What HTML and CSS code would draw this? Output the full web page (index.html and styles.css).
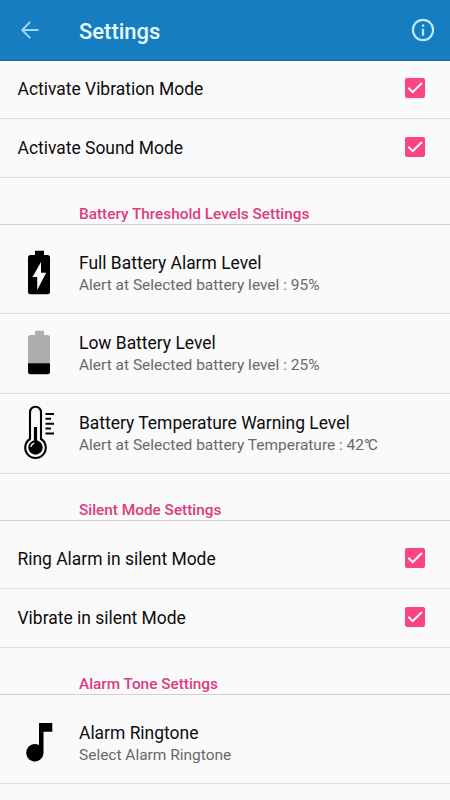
FILE: index.html
```html
<!DOCTYPE html>
<html lang="en">
<head>
<meta charset="utf-8">
<title>Settings</title>
<link rel="stylesheet" href="styles.css">
</head>
<body>
<svg class="defs" aria-hidden="true">
  <symbol id="check" viewBox="0 0 20 20">
    <rect width="20" height="20" rx="2" fill="#fc4482"/>
    <path d="M3.3 9.8 L7.7 14.2 L16.9 5" fill="none" stroke="#fff" stroke-width="2"/>
  </symbol>
</svg>
<header class="bar">
  <svg class="back" viewBox="0 0 18 18"><path d="M17.5 9H1.6M9.2 .9L1.2 9L9.2 17.1" fill="none" stroke="#9bd7fb" stroke-width="2"/></svg>
  <h1 class="bar-title">Settings</h1>
  <svg class="info" viewBox="0 0 24 24"><circle cx="12" cy="12" r="10.1" fill="none" stroke="#bdeaff" stroke-width="2.1"/><path d="M12 6.6v2.2M12 10.8v7" stroke="#bdeaff" stroke-width="2.3"/></svg>
</header>
<main>
  <div class="row top"><span class="title">Activate Vibration Mode</span><svg class="check"><use href="#check"/></svg></div>
  <div class="row taller"><span class="title">Activate Sound Mode</span><svg class="check"><use href="#check"/></svg></div>

  <h2 class="category">Battery Threshold Levels Settings</h2>
  <div class="row detail first">
    <svg class="icon" viewBox="0 0 40 60"><path d="M17 7.700h9v4.300h3.500q2.500 0 2.500 2.500v34.200q0 2.500-2.500 2.500h-17q-2.500 0-2.500-2.500v-34.200q0-2.500 2.500-2.500h4.500z"/><path d="M23 19v10.700h5.200L19.200 47V34H14.500z" fill="#fafafa"/></svg>
    <div class="text"><div class="title">Full Battery Alarm Level</div><div class="summary">Alert at Selected battery level : 95%</div></div>
  </div>
  <div class="row detail">
    <svg class="icon" viewBox="0 0 40 60"><path d="M17 7.700h9v4.300h3.500q2.500 0 2.500 2.500v26h-22v-26q0-2.500 2.500-2.500h4.500z" fill="#adadad"/><path d="M10 40.300h22v8.400q0 2.500-2.500 2.500h-17q-2.500 0-2.500-2.500z"/></svg>
    <div class="text"><div class="title">Low Battery Level</div><div class="summary">Alert at Selected battery level : 25%</div></div>
  </div>
  <div class="row detail">
    <svg class="icon" viewBox="0 0 40 60"><path d="M12 36V9.200a5.500 5.500 0 0 1 11 0V36a10.300 10.300 0 1 1-11 0z" fill="#fafafa" stroke="#000" stroke-width="2.100"/><circle cx="17.500" cy="44.500" r="7.200"/><path d="M17.500 24v18" stroke="#000" stroke-width="3.200"/><path d="M12.900 44a5 5 0 0 1 3.400-3.900" fill="none" stroke="#fafafa" stroke-width="1.200"/><path d="M27.500 11h8.500M27.500 15.800h5.500M27.500 20.700h8.500M27.500 25.500h5.500M27.500 30.500h8.500" stroke="#000" stroke-width="1.900"/></svg>
    <div class="text"><div class="title">Battery Temperature Warning Level</div><div class="summary">Alert at Selected battery Temperature : 42<span class="unit">°C</span></div></div>
  </div>

  <h2 class="category">Silent Mode Settings</h2>
  <div class="row first"><span class="title">Ring Alarm in silent Mode</span><svg class="check"><use href="#check"/></svg></div>
  <div class="row taller"><span class="title">Vibrate in silent Mode</span><svg class="check"><use href="#check"/></svg></div>

  <h2 class="category">Alarm Tone Settings</h2>
  <div class="row detail first">
    <svg class="icon" viewBox="0 0 40 60"><path d="M21 10h13.300v8.700h-8.800V40.300a8.700 8.700 0 1 1-4.500-8.200z"/></svg>
    <div class="text"><div class="title">Alarm Ringtone</div><div class="summary">Select Alarm Ringtone</div></div>
  </div>
</main>
</body>
</html>
```

FILE: styles.css
```css
* { box-sizing: border-box; }
body {
  margin: 0;
  height: 800px;
  overflow: hidden;
  background: #fafafa;
  color: #0c0c0c;
  font-family: Roboto, "Liberation Sans", sans-serif;
}
svg { display: block; flex: none; }
.defs { width: 0; height: 0; position: absolute; }
.bar {
  display: flex;
  align-items: center;
  height: 61px;
  padding: 0 15px 0 21px;
  background: #177dc1;
  border-bottom: 1px solid #126ba5;
}
.back { width: 18px; height: 18px; }
.bar-title {
  flex: 1;
  margin: 3px 0 0 40px;
  color: #e6f8ff;
  font-size: 22px;
  font-weight: 500;
  line-height: 26px;
}
.info { width: 24px; height: 24px; }
.row {
  display: flex;
  align-items: center;
  height: 58px;
  padding: 0 25px 0 17.5px;
  border-bottom: 1px solid #dcdcdc;
}
.row.top { padding-bottom: 2px; }
.row.taller { height: 59px; }
.row .title { flex: 1; }
.title { font-size: 17.45px; line-height: 24px; white-space: nowrap; }
.check { width: 20px; height: 20px; margin-top: -2px; }
.category {
  height: 47px;
  margin: 0;
  padding: 26px 0 0 79px;
  border-bottom: 1px solid #d0d0d0;
  color: #dc3c80;
  font-size: 15.35px;
  font-weight: 500;
  line-height: 20px;
}
.row.first { height: 68px; padding-top: 9px; }
.row.detail { height: 80px; padding-left: 18px; }
.row.detail.first { height: 89px; }
.icon { width: 40px; height: 60px; margin-top: -2px; }
.text { margin-left: 21px; }
.detail .title { line-height: 22px; }
.summary { color: #696969; font-size: 15.48px; line-height: 22px; white-space: nowrap; }
.unit { letter-spacing: -2px; }
```
